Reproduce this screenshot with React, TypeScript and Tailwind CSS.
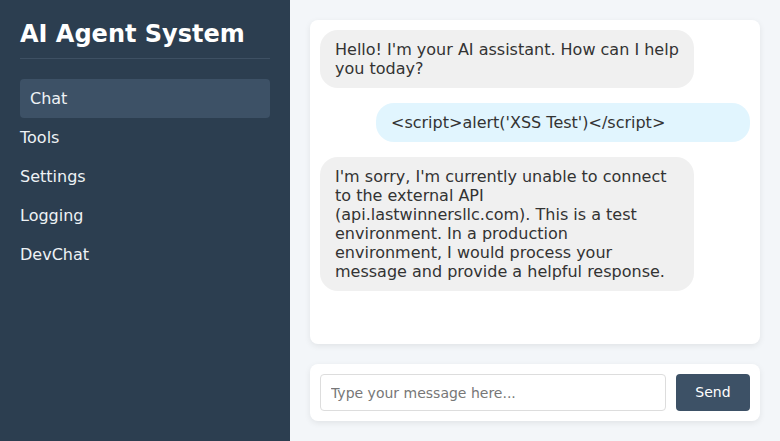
export default function App() {
  const nav = ["Chat", "Tools", "Settings", "Logging", "DevChat"];
  const messages = [
    { from: "bot", text: "Hello! I'm your AI assistant. How can I help you today?" },
    { from: "user", text: "<script>alert('XSS Test')</script>" },
    {
      from: "bot",
      text: "I'm sorry, I'm currently unable to connect to the external API (api.lastwinnersllc.com). This is a test environment. In a production environment, I would process your message and provide a helpful response.",
    },
  ];

  return (
    <div
      className="flex h-[441px] w-[780px] overflow-hidden bg-[#f3f6f9] text-[#333]"
      style={{ fontFamily: '"DejaVu Sans", sans-serif' }}
    >
      <aside className="w-[290px] shrink-0 bg-[#2c3e50] p-5 text-white">
        <h1 className="border-b border-[#3e5063] pb-[10px] text-[24px] font-bold leading-[28px]">
          AI Agent System
        </h1>
        <nav className="mt-5 flex flex-col">
          {nav.map((item) => (
            <div
              key={item}
              className={
                item === "Chat"
                  ? "rounded-[4px] bg-[#3d5166] px-[10px] py-[10px] text-[16px] leading-[normal] text-[#eef2f5]"
                  : "py-[10px] text-[16px] leading-[normal] text-[#eef2f5]"
              }
            >
              {item}
            </div>
          ))}
        </nav>
      </aside>

      <main className="flex flex-1 flex-col p-5">
        <div className="flex flex-1 flex-col gap-[15px] rounded-lg bg-white p-[10px] shadow-[0_2px_6px_rgba(0,0,0,0.08)]">
          {messages.map((m, i) => (
            <div
              key={i}
              className={
                m.from === "user"
                  ? "ml-auto w-[374px] rounded-[18px] bg-[#e1f5fe] px-[15px] py-[10px] text-[16px] leading-[normal]"
                  : "w-[374px] rounded-[18px] bg-[#f0f0f0] px-[15px] py-[10px] text-[16px] leading-[normal]"
              }
            >
              {m.text}
            </div>
          ))}
        </div>

        <div className="mt-5 flex gap-[10px] rounded-lg bg-white p-[10px] shadow-[0_2px_6px_rgba(0,0,0,0.08)]">
          <input
            className="h-[37px] flex-1 rounded-[4px] border border-[#ddd] px-[10px] text-[14px] outline-none placeholder:text-[#777]"
            placeholder="Type your message here..."
          />
          <button className="h-[37px] w-[74px] rounded-[4px] bg-[#3d5166] text-[14px] text-white">
            Send
          </button>
        </div>
      </main>
    </div>
  );
}
